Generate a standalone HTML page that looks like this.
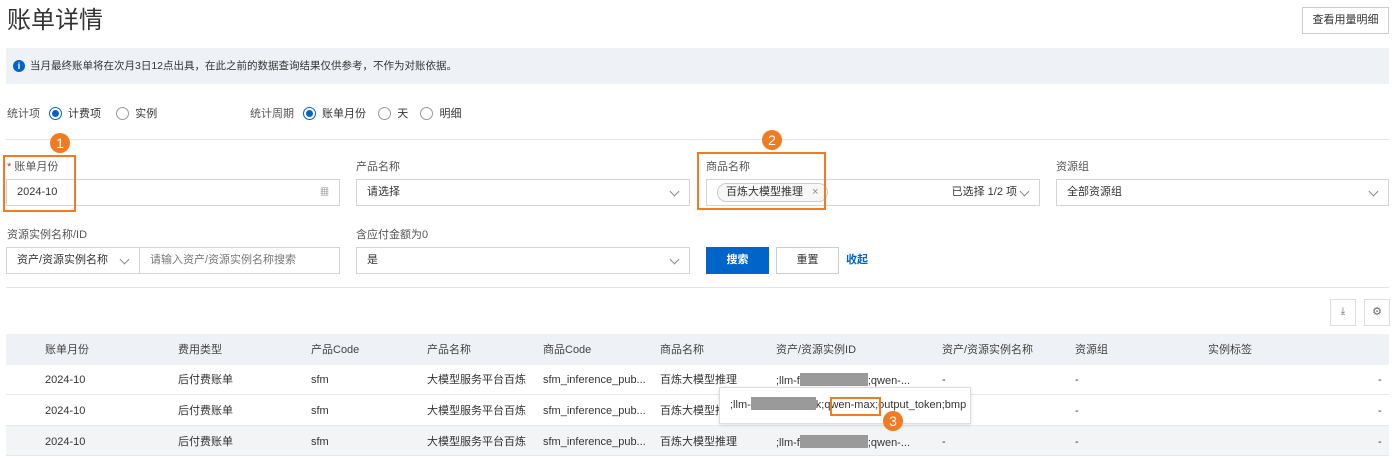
<!DOCTYPE html>
<html><head><meta charset="utf-8"><style>
*{box-sizing:border-box;margin:0;padding:0}
body{width:1400px;height:462px;background:#fff;font-family:"Liberation Sans","Noto Sans CJK SC",sans-serif;font-size:11px;line-height:14px;color:#333;position:relative;overflow:hidden}
.a{position:absolute}
.inp{position:absolute;height:27px;border:1px solid #d4d4d4;background:#fff;font-size:11px;line-height:25px;padding-left:10px;color:#333}
.lbl{position:absolute;font-size:11px;color:#555}
.chev{position:absolute;right:11px;top:8px;width:7px;height:7px;border-right:1px solid #888;border-bottom:1px solid #888;transform:rotate(45deg)}
.radio{display:inline-block;width:13px;height:13px;border:1px solid #999;border-radius:50%;vertical-align:-3px;margin-right:6px;position:relative}
.radio.on{border-color:#0064c8}
.radio.on:after{content:"";position:absolute;left:2px;top:2px;width:7px;height:7px;border-radius:50%;background:#0064c8}
.th,.td{position:absolute;font-size:11px;line-height:14px}
.th{color:#444}
.ob{position:absolute;border:2px solid #f07b22}
.oc{position:absolute;width:20px;height:20px;border-radius:50%;background:#f07b22;color:#fff;font-size:14px;text-align:center;line-height:20px}
.blur{display:inline-block;width:68px;height:13px;background:#9a9a9a;vertical-align:-2px}
</style></head><body>
<div class="a" style="left:7px;top:6px;font-size:24px;line-height:30px;color:#333">账单详情</div>
<div class="a" style="left:1302px;top:7px;width:87px;height:27px;border:1px solid #ccc;text-align:center;line-height:25px;font-size:11px">查看用量明细</div>
<div class="a" style="left:6px;top:48px;width:1383px;height:36px;background:#eef2f7"></div>
<div class="a" style="left:13px;top:60px;width:12px;height:12px;border-radius:50%;background:#0064c8;color:#fff;font-size:9px;font-weight:bold;text-align:center;line-height:12px">i</div>
<div class="a" style="left:30px;top:59px;font-size:10.5px;color:#333">当月最终账单将在次月3日12点出具，在此之前的数据查询结果仅供参考，不作为对账依据。</div>
<div class="a" style="left:7px;top:107px;color:#555">统计项</div>
<div class="a" style="left:49px;top:107px"><span class="radio on"></span>计费项&nbsp;&nbsp;&nbsp;&nbsp;&nbsp;<span class="radio"></span>实例</div>
<div class="a" style="left:250px;top:107px;color:#555">统计周期</div>
<div class="a" style="left:303px;top:107px"><span class="radio on"></span>账单月份&nbsp;&nbsp;&nbsp;&nbsp;<span class="radio"></span>天&nbsp;&nbsp;&nbsp;&nbsp;<span class="radio"></span>明细</div>
<div class="a" style="left:6px;top:139px;width:1383px;height:1px;background:#e5e5e5"></div>
<div class="lbl" style="left:7px;top:160px"><span style="color:#d93026">*</span> 账单月份</div>
<div class="inp" style="left:6px;top:179px;width:334px">2024-10<span style="position:absolute;right:10px;font-size:9px;color:#777">▦</span></div>
<div class="lbl" style="left:356px;top:160px">产品名称</div>
<div class="inp" style="left:356px;top:179px;width:334px">请选择<span class="chev"></span></div>
<div class="lbl" style="left:706px;top:160px">商品名称</div>
<div class="inp" style="left:706px;top:179px;width:334px"><span style="display:inline-block;border:1px solid #ccc;border-radius:10px;height:19px;line-height:17px;padding:0 8px;margin-top:3px;background:#f7f7f7;vertical-align:top">百炼大模型推理 <span style="color:#888;margin-left:6px">×</span></span><span style="position:absolute;right:22px;top:0">已选择 1/2 项</span><span class="chev"></span></div>
<div class="lbl" style="left:1056px;top:160px">资源组</div>
<div class="inp" style="left:1056px;top:179px;width:333px">全部资源组<span class="chev"></span></div>
<div class="lbl" style="left:7px;top:228px">资源实例名称/ID</div>
<div class="inp" style="left:6px;top:247px;width:134px">资产/资源实例名称<span class="chev"></span></div>
<div class="inp" style="left:139px;top:247px;width:201px;color:#777">请输入资产/资源实例名称搜索</div>
<div class="lbl" style="left:356px;top:228px">含应付金额为0</div>
<div class="inp" style="left:356px;top:247px;width:334px">是<span class="chev"></span></div>
<div class="a" style="left:706px;top:247px;width:63px;height:27px;background:#0064c8;color:#fff;text-align:center;line-height:27px;font-weight:bold">搜索</div>
<div class="a" style="left:776px;top:247px;width:63px;height:27px;border:1px solid #ccc;text-align:center;line-height:25px">重置</div>
<div class="a" style="left:846px;top:253px;color:#0064c8;font-weight:bold">收起</div>
<div class="a" style="left:6px;top:287px;width:1383px;height:1px;background:#e5e5e5"></div>
<div class="a" style="left:1330px;top:299px;width:26px;height:27px;border:1px solid #ddd;text-align:center;line-height:24px;font-size:10px;color:#666">⤓</div>
<div class="a" style="left:1364px;top:299px;width:26px;height:27px;border:1px solid #ddd;text-align:center;line-height:24px;font-size:11px;color:#666">⚙</div>
<div class="a" style="left:6px;top:334px;width:1383px;height:31px;background:#eef1f6"></div>
<div class="a" style="left:6px;top:394px;width:1383px;height:1px;background:#e8e8e8"></div>
<div class="a" style="left:6px;top:425px;width:1383px;height:31px;background:#f3f4f6;border-top:1px solid #e8e8e8;border-bottom:1px solid #e8e8e8"></div>
<div class="th" style="left:45px;top:343px">账单月份</div><div class="th" style="left:178px;top:343px">费用类型</div><div class="th" style="left:311px;top:343px">产品Code</div><div class="th" style="left:427px;top:343px">产品名称</div><div class="th" style="left:543px;top:343px">商品Code</div><div class="th" style="left:660px;top:343px">商品名称</div><div class="th" style="left:776px;top:343px">资产/资源实例ID</div><div class="th" style="left:942px;top:343px">资产/资源实例名称</div><div class="th" style="left:1075px;top:343px">资源组</div><div class="th" style="left:1208px;top:343px">实例标签</div>
<div class="td" style="left:45px;top:373px">2024-10</div><div class="td" style="left:178px;top:373px">后付费账单</div><div class="td" style="left:311px;top:373px">sfm</div><div class="td" style="left:427px;top:373px">大模型服务平台百炼</div><div class="td" style="left:543px;top:373px">sfm_inference_pub...</div><div class="td" style="left:660px;top:373px">百炼大模型推理</div><div class="td" style="left:776px;top:373px">;llm-f<span class="blur"></span>;qwen-...</div><div class="td" style="left:942px;top:373px">-</div><div class="td" style="left:1075px;top:373px">-</div><div class="td" style="left:1378px;top:373px">-</div>
<div class="td" style="left:45px;top:404px">2024-10</div><div class="td" style="left:178px;top:404px">后付费账单</div><div class="td" style="left:311px;top:404px">sfm</div><div class="td" style="left:427px;top:404px">大模型服务平台百炼</div><div class="td" style="left:543px;top:404px">sfm_inference_pub...</div><div class="td" style="left:660px;top:404px">百炼大模型推理</div><div class="td" style="left:1075px;top:404px">-</div><div class="td" style="left:1378px;top:404px">-</div>
<div class="td" style="left:45px;top:435px">2024-10</div><div class="td" style="left:178px;top:435px">后付费账单</div><div class="td" style="left:311px;top:435px">sfm</div><div class="td" style="left:427px;top:435px">大模型服务平台百炼</div><div class="td" style="left:543px;top:435px">sfm_inference_pub...</div><div class="td" style="left:660px;top:435px">百炼大模型推理</div><div class="td" style="left:776px;top:435px">;llm-f<span class="blur"></span>;qwen-...</div><div class="td" style="left:942px;top:435px">-</div><div class="td" style="left:1075px;top:435px">-</div><div class="td" style="left:1378px;top:435px">-</div>
<div class="a" style="left:719px;top:387px;width:252px;height:37px;background:#fff;border:1px solid #ddd;box-shadow:0 1px 4px rgba(0,0,0,.12);font-size:11px;line-height:35px;padding-left:10px">;llm-<span class="blur" style="width:65px"></span>k;qwen-max;output_token;bmp</div>
<div class="ob" style="left:3px;top:155px;width:73px;height:57px"></div>
<div class="oc" style="left:50px;top:133px">1</div>
<div class="ob" style="left:697px;top:152px;width:129px;height:58px"></div>
<div class="oc" style="left:762px;top:130px">2</div>
<div class="ob" style="left:830px;top:397px;width:51px;height:19px"></div>
<div class="oc" style="left:883px;top:411px">3</div>
</body></html>
